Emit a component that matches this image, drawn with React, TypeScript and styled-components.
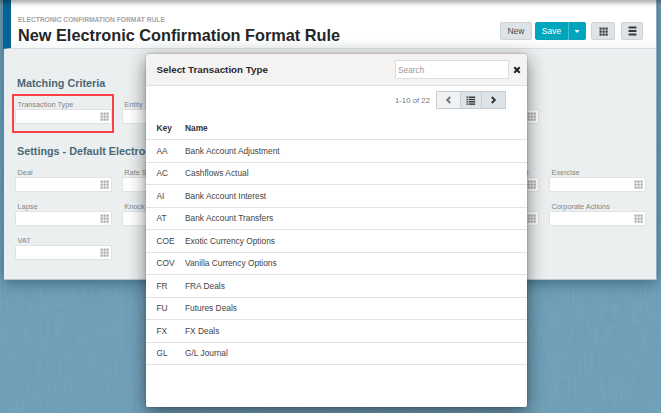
import React from "react";
import styled, { createGlobalStyle, css } from "styled-components";

const Global = createGlobalStyle`
  * { box-sizing: border-box; }
  html, body { margin: 0; padding: 0; overflow: hidden; }
  body { font-family: "Liberation Sans", Arial, sans-serif; background: #6e9fb7; }
  button, input { font-family: inherit; margin: 0; padding: 0; }
`;

const Desktop = styled.div`
  position: relative;
  width: 661px;
  height: 413px;
  overflow: hidden;
  background: #6e9fb7;
`;

const Linen = styled.svg`
  position: absolute;
  inset: 0;
  width: 100%;
  height: 100%;
`;

const Panel = styled.main`
  position: relative;
  width: 653px;
  height: 280px;
  margin-left: 4px;
  background: #ebeff0;
  border-bottom: 1px solid #b9c4c8;
  border-right: 1px solid #8fa9b5;
  box-shadow: 0 3px 14px rgba(10, 50, 75, 0.5);
`;

const TopShade = styled.div`
  position: absolute;
  inset: 0 0 auto;
  height: 8px;
  background: linear-gradient(rgba(0, 0, 0, 0.3), rgba(0, 0, 0, 0.22) 25%, rgba(0, 0, 0, 0.06) 60%, transparent);
`;

const Header = styled.header`
  display: flex;
  justify-content: space-between;
  height: 49px;
  margin-left: -1px;
  padding: 15px 13px 0 7px;
  border-left: 8px solid #066394;
  border-bottom: 1px solid #dadddf;
  background: linear-gradient(#fff 80%, #f5f7f8);
`;

const Eyebrow = styled.div`
  font-size: 6.7px;
  line-height: 9px;
  font-weight: bold;
  color: #a3a3a3;
  white-space: nowrap;
`;

const Title = styled.h1`
  margin: 2px 0 0;
  font-size: 16.3px;
  line-height: 19px;
  color: #262626;
  white-space: nowrap;
`;

const Actions = styled.div`
  display: flex;
  align-items: flex-start;
  padding-top: 7px;
`;

const Button = styled.button<{ $width: number; $gap?: number; $primary?: boolean; $edge?: "left" | "right" }>`
  display: flex;
  align-items: center;
  justify-content: center;
  flex: none;
  width: ${(p) => p.$width}px;
  height: 18px;
  margin-left: ${(p) => p.$gap ?? 0}px;
  border: 1px solid #cdd4d8;
  border-radius: ${(p) => (p.$edge === "left" ? "2px 0 0 2px" : p.$edge === "right" ? "0 2px 2px 0" : "2px")};
  background: #dde3e7;
  color: #4b4b4b;
  font-size: 8.5px;
  line-height: 16px;
  ${(p) =>
    p.$primary &&
    css`
      border-color: #07a1b8;
      background: #00a6be;
      color: #fff;
    `}
  ${(p) => p.$primary && p.$edge === "right" && css`border-left-color: #48bccd;`}
`;

const Section = styled.section<{ $top: number }>`
  padding: ${(p) => p.$top}px 0 0 11px;
`;

const SectionTitle = styled.h2`
  margin: 0 0 0 2px;
  font-size: 10.8px;
  line-height: 13px;
  color: #4b6975;
  white-space: nowrap;
`;

const FieldGrid = styled.div`
  display: grid;
  grid-template-columns: repeat(6, 97px);
  column-gap: 9.8px;
  row-gap: 10px;
  margin-top: 10px;
`;

const Field = styled.label<{ $marked?: boolean }>`
  position: relative;
  display: block;
  height: 24px;
  font-size: 7.35px;
  line-height: 9px;
  color: #858585;
  white-space: nowrap;
  ${(p) =>
    p.$marked &&
    css`
      &::after {
        content: "";
        position: absolute;
        inset: -6px -2px -9px -3px;
        border: 2px solid #fb4146;
      }
    `}
`;

const FieldName = styled.span`
  display: block;
  height: 9px;
  padding-left: 2.5px;
`;

const FieldBox = styled.span`
  display: flex;
  align-items: center;
  justify-content: flex-end;
  height: 15px;
  padding-right: 2px;
  border: 1px solid #e0e2e3;
  border-radius: 1px;
  background: #fff;
`;

const Modal = styled.section`
  position: absolute;
  left: 146px;
  top: 53px;
  width: 381px;
  height: 354px;
  overflow: hidden;
  border-top: 1px solid #bbb;
  border-radius: 4px 4px 2px 2px;
  background: #fff;
`;

const ModalShadow = styled.div`
  position: absolute;
  left: 146px;
  top: 54px;
  width: 381px;
  height: 353px;
  border-radius: 4px;
  box-shadow: 0 5px 18px rgba(0, 0, 0, 0.5), 0 0 2px rgba(0, 0, 0, 0.3);
`;

const ModalHead = styled.div`
  display: flex;
  align-items: center;
  height: 32px;
  padding: 0 6px 0 10.5px;
  border-bottom: 1px solid #e1e1e1;
  background: #f4f3f1;
`;

const ModalTitle = styled.h3`
  flex: 1;
  margin: 1px 0 0;
  font-size: 9.8px;
  line-height: 12px;
  color: #2b2b2b;
`;

const Search = styled.input`
  width: 114px;
  height: 19px;
  margin-right: 4px;
  padding-left: 2px;
  border: 1px solid #dedede;
  background: #fff;
  font-size: 8.3px;
  &::placeholder { color: #999; opacity: 1; }
`;

const Close = styled.button`
  display: flex;
  width: 8px;
  border: 0;
  background: none;
`;

const Pager = styled.div`
  display: flex;
  align-items: center;
  justify-content: flex-end;
  height: 18px;
  margin: 5px 21px 0 0;
`;

const PageCount = styled.span`
  margin-right: 7px;
  font-size: 7.8px;
  color: #777;
`;

const PageButton = styled.button<{ $width: number; $faint?: boolean }>`
  display: flex;
  align-items: center;
  justify-content: center;
  width: ${(p) => p.$width}px;
  height: 18px;
  margin-left: -1px;
  border: 1px solid #c8ced1;
  background: ${(p) => (p.$faint ? "#f0f2f3" : "#dde3e7")};
`;

const Rows = styled.div`
  margin-top: 8.6px;
`;

const Row = styled.div<{ $head?: boolean }>`
  display: grid;
  grid-template-columns: 28.5px 1fr;
  align-items: center;
  height: 22.5px;
  padding-left: 10.5px;
  border-bottom: 1px solid #e2e2e2;
  font-size: 8.35px;
  line-height: 12px;
  font-weight: ${(p) => (p.$head ? "bold" : "normal")};
  color: ${(p) => (p.$head ? "#333" : "#444")};
`;

const Icon = styled.svg`
  display: block;
  flex: none;
`;

const GridIcon = ({ color = "#aaa" }: { color?: string }) => (
  <Icon width="9" height="9" viewBox="0 0 9 9" fill={color}>
    {[0.5, 3.5, 6.5].map((y) => [0.5, 3.5, 6.5].map((x) => <rect key={`${x}${y}`} x={x} y={y} width="2.2" height="2.2" />))}
  </Icon>
);

const MenuIcon = () => (
  <Icon width="9" height="10" viewBox="0 0 9 10" fill="#383838">
    <rect x="0.5" y="0.5" width="8" height="2" rx=".4" />
    <rect x="0.5" y="4" width="8" height="2" rx=".4" />
    <rect x="0.5" y="7.5" width="8" height="2" rx=".4" />
  </Icon>
);

const ListIcon = () => (
  <Icon width="10" height="9" viewBox="0 0 10 9" fill="#303030">
    {[0.5, 2.8, 5.1, 7.4].map((y) => (
      <React.Fragment key={y}>
        <rect x="0.5" y={y} width="1.4" height="1.4" />
        <rect x="2.6" y={y} width="6.6" height="1.4" />
      </React.Fragment>
    ))}
  </Icon>
);

const Chevron = ({ next }: { next?: boolean }) => (
  <Icon width="7" height="8" viewBox="0 0 7 8" fill="none" stroke={next ? "#333" : "#777"} strokeWidth="2">
    <path d={next ? "M1.8 1 4.8 4 1.8 7" : "M5.2 1 2.2 4 5.2 7"} />
  </Icon>
);

type FieldDef = { name: string; marked?: boolean };

const criteria: FieldDef[] = [
  { name: "Transaction Type", marked: true },
  { name: "Entity" },
  { name: "" },
  { name: "" },
  { name: "" },
];

const settings: FieldDef[] = [
  "Deal", "Rate S", "", "", "", "Exercise",
  "Lapse", "Knock", "", "", "", "Corporate Actions",
  "VAT",
].map((name) => ({ name }));

const TailName = styled(FieldName)`
  padding: 0 10.5px 0 0;
  text-align: right;
`;

const rows = [
  ["AA", "Bank Account Adjustment"],
  ["AC", "Cashflows Actual"],
  ["AI", "Bank Account Interest"],
  ["AT", "Bank Account Transfers"],
  ["COE", "Exotic Currency Options"],
  ["COV", "Vanilla Currency Options"],
  ["FR", "FRA Deals"],
  ["FU", "Futures Deals"],
  ["FX", "FX Deals"],
  ["GL", "G/L Journal"],
];

const Fields = ({ items, tailAt }: { items: FieldDef[]; tailAt?: number }) => (
  <FieldGrid>
    {items.map((item, i) => (
      <Field key={i} $marked={item.marked}>
        {i === tailAt ? <TailName>n</TailName> : <FieldName>{item.name}</FieldName>}
        <FieldBox><GridIcon /></FieldBox>
      </Field>
    ))}
  </FieldGrid>
);

export default function App() {
  return (
    <Desktop>
      <Global />
      <Linen aria-hidden="true">
        <filter id="weft" x="0" y="0" width="100%" height="100%">
          <feTurbulence type="fractalNoise" baseFrequency="0.04 0.5" numOctaves="3" seed="4" />
          <feColorMatrix values="0 0 0 0 .2  0 0 0 0 .4  0 0 0 0 .5  1 0 0 0 -.35" />
        </filter>
        <filter id="warp" x="0" y="0" width="100%" height="100%">
          <feTurbulence type="fractalNoise" baseFrequency="0.4 0.04" numOctaves="3" seed="9" />
          <feColorMatrix values="0 0 0 0 .6  0 0 0 0 .8  0 0 0 0 .9  .8 0 0 0 -.3" />
        </filter>
        <rect width="100%" height="100%" filter="url(#weft)" opacity=".45" />
        <rect width="100%" height="100%" filter="url(#warp)" opacity=".15" />
      </Linen>
      <Panel>
        <Header>
          <div>
            <Eyebrow>ELECTRONIC CONFIRMATION FORMAT RULE</Eyebrow>
            <Title>New Electronic Confirmation Format Rule</Title>
          </div>
          <Actions>
            <Button $width={32}>New</Button>
            <Button $width={33} $gap={3} $primary $edge="left">Save</Button>
            <Button $width={18} $primary $edge="right">
              <Icon width="6" height="3" viewBox="0 0 6 3" fill="#fff"><path d="M.5 0h5L3 3z" /></Icon>
            </Button>
            <Button $width={24} $gap={5}><GridIcon color="#383838" /></Button>
            <Button $width={22} $gap={6}><MenuIcon /></Button>
          </Actions>
        </Header>
        <Section $top={28}>
          <SectionTitle>Matching Criteria</SectionTitle>
          <Fields items={criteria} />
        </Section>
        <Section $top={21}>
          <SectionTitle>Settings - Default Electro</SectionTitle>
          <Fields items={settings} tailAt={4} />
        </Section>
      </Panel>
      <TopShade />
      <ModalShadow />
      <Modal>
        <ModalHead>
          <ModalTitle>Select Transaction Type</ModalTitle>
          <Search placeholder="Search" />
          <Close aria-label="Close">
            <Icon width="8" height="8" viewBox="0 0 8 8" stroke="#222" strokeWidth="2"><path d="M1.3 1.3 6.7 6.7M6.7 1.3 1.3 6.7" /></Icon>
          </Close>
        </ModalHead>
        <Pager>
          <PageCount>1-10 of 22</PageCount>
          <PageButton $width={25} $faint aria-label="Previous"><Chevron /></PageButton>
          <PageButton $width={22} aria-label="List"><ListIcon /></PageButton>
          <PageButton $width={25} aria-label="Next"><Chevron next /></PageButton>
        </Pager>
        <Rows>
          <Row $head><span>Key</span><span>Name</span></Row>
          {rows.map(([key, name]) => (
            <Row key={key}><span>{key}</span><span>{name}</span></Row>
          ))}
        </Rows>
      </Modal>
    </Desktop>
  );
}
